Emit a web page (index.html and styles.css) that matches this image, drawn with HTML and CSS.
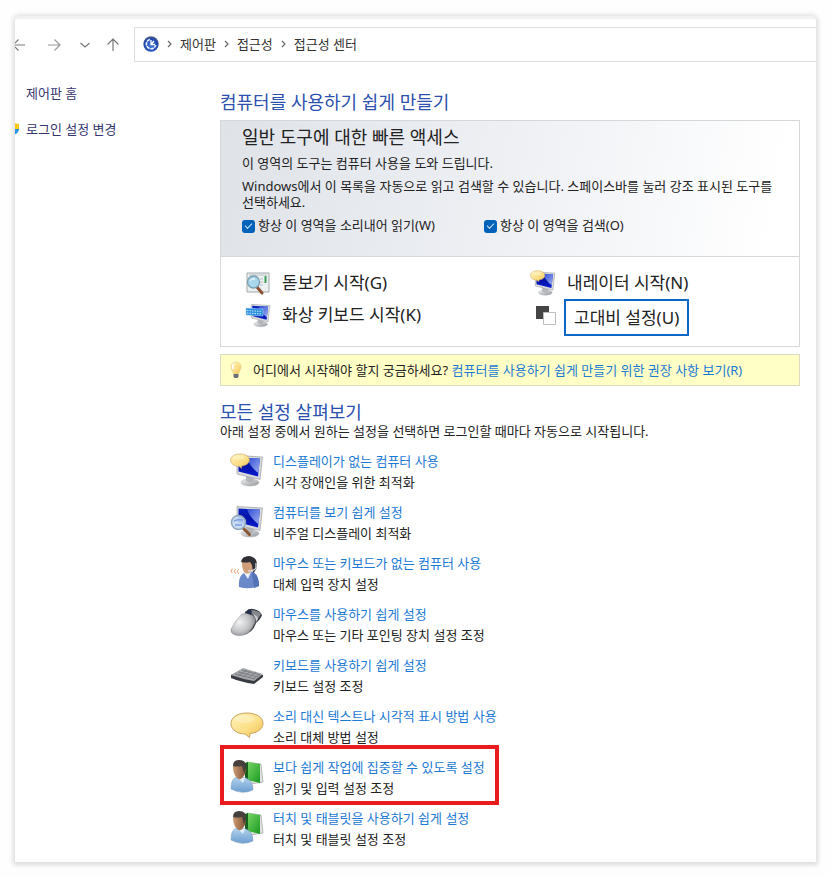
FILE: index.html
```html
<!DOCTYPE html>
<html lang="ko">
<head>
<meta charset="utf-8">
<title>접근성 센터</title>
<link rel="stylesheet" href="styles.css">
</head>
<body>
<svg class="defs" aria-hidden="true">
  <defs>
    <linearGradient id="screen" x1="0" y1="0" x2="0" y2="1"><stop offset="0" stop-color="#0a22c0"/><stop offset=".5" stop-color="#0412a8"/><stop offset="1" stop-color="#0a1cd0"/></linearGradient>
    <linearGradient id="sheen" x1="0" y1="0" x2="1" y2="1"><stop offset="0" stop-color="#3656dc"/><stop offset="1" stop-color="#b9cbf8"/></linearGradient>
    <linearGradient id="metal" x1="0" y1="0" x2="1" y2="1"><stop offset="0" stop-color="#f6f6f6"/><stop offset="1" stop-color="#8e9297"/></linearGradient>
    <linearGradient id="gold" x1="0" y1="0" x2="1" y2="1"><stop offset="0" stop-color="#fff3bd"/><stop offset=".6" stop-color="#fbdd83"/><stop offset="1" stop-color="#eebd4d"/></linearGradient>
    <linearGradient id="shirt" x1="0" y1="0" x2="0" y2="1"><stop offset="0" stop-color="#b4d3ee"/><stop offset="1" stop-color="#6c9fd0"/></linearGradient>
    <linearGradient id="book" x1="0" y1="0" x2="1" y2="1"><stop offset="0" stop-color="#7fd968"/><stop offset="1" stop-color="#179a22"/></linearGradient>
    <linearGradient id="skin" x1="0" y1="0" x2="1" y2="0"><stop offset="0" stop-color="#cf9c74"/><stop offset="1" stop-color="#7e5236"/></linearGradient>
    <radialGradient id="shell" cx=".35" cy=".4" r=".75"><stop offset="0" stop-color="#f2f2f2"/><stop offset=".55" stop-color="#c4c5c7"/><stop offset="1" stop-color="#7d8084"/></radialGradient>
    <radialGradient id="orb" cx=".5" cy=".6" r=".6"><stop offset="0" stop-color="#3f78e0"/><stop offset=".75" stop-color="#2348ac"/><stop offset="1" stop-color="#59647e"/></radialGradient>
    <symbol id="monitor" viewBox="0 0 34 34">
      <ellipse cx="20" cy="29.500" rx="9" ry="3.500" fill="url(#metal)" stroke="#b4b6b9" stroke-width=".6"/>
      <path d="M16 23l8 2-1 4q-4 1-7-1z" fill="#b4b6ba"/>
      <path d="M7 2.500L32.500 4 30 26.500 7 21z" fill="#d8dadc" stroke="#9b9ea2" stroke-width=".7"/>
      <path d="M8.500 4.500L30 5.600 28 23.500 8.500 18.500z" fill="url(#screen)"/>
      <path d="M17 5L30 5.600 28.400 20Q20 14 17 5z" fill="url(#sheen)" opacity=".85"/>
    </symbol>
    <symbol id="bubble" viewBox="0 0 34 26">
      <path d="M17 1C8 1 1 5 1 11.500S8 22 15 22l4.500 3.500.5-4C27 21 33 17 33 11.500 33 5 26 1 17 1z" fill="url(#gold)" stroke="#c9a362" stroke-width="1"/>
      <ellipse cx="15" cy="7" rx="10" ry="4" fill="#fffbe0" opacity=".35"/>
    </symbol>
    <symbol id="talking" viewBox="0 0 34 34">
      <use href="#monitor" width="34" height="34"/><use href="#bubble" x="0" y="0" width="20" height="16"/>
    </symbol>
    <symbol id="magnify" viewBox="0 0 34 34">
      <use href="#monitor" width="34" height="34"/>
      <path d="M13 24l6.500 6.500" stroke="#8a5632" stroke-width="3" stroke-linecap="round"/>
      <circle cx="8.500" cy="18.500" r="7" fill="#c3daf3" fill-opacity=".9" stroke="#8ea6ba" stroke-width="1.500"/>
      <path d="M4 17q4-2 9-1M5 21h7" fill="none" stroke="#7d9de2" stroke-width="1.500"/>
    </symbol>
    <symbol id="headset" viewBox="0 0 34 34">
      <path d="M9 32q-1-11 5-14l9-1q6 3 6 14-10 4-20 1z" fill="#6a89cb"/>
      <path d="M14 18l7-1-3 7z" fill="#eef2fa"/><path d="M22 17q7 3 7 14l-5 2z" fill="#5472b6"/>
      <path d="M12 8q1-6 7-6 6 1 6 8 0 5-4 7-4 3-7 0-2-3-2-9z" fill="#cf9f7c"/>
      <path d="M11 7q1-6 8-6 8 1 8 9 0 5-4 8l-1-8-2-3q-5 1-9 0z" fill="#2f2f34"/>
      <path d="M26 8v5q-2 3-8 3" fill="none" stroke="#d9dce2" stroke-width="1.300"/>
      <path d="M9 14l-2 2 2 3M6 14l-2 2 2 3M3 14l-2 1 1 3" fill="none" stroke="#f0a983" stroke-width="1"/>
    </symbol>
    <symbol id="mouse" viewBox="0 0 34 34">
      <path d="M15 6q4-4 8-3 7 1 9 6-1 4-6 8-3 10-13 12z" fill="#3b3e44"/>
      <path d="M19 4q9 0 12 4l-4 6q-2-6-9-8z" fill="#85898e"/>
      <path d="M23 8q5 2 5 5l-2 3q0-4-3-8z" fill="#c9cbce"/>
      <path d="M1 23Q5 15 12 8q6-2 10 1 4 3 3 7-2 6-7 11-6 4-13 2-5-2-4-6z" fill="url(#shell)" stroke="#85888c" stroke-width=".5"/>
      <path d="M16 7l3-4 3 2-1 4z" fill="#24304c"/>
    </symbol>
    <symbol id="keyboard" viewBox="0 0 34 34">
      <path d="M1 18L13 12l20 6v2l-9 7Q11 25 1 21z" fill="#3a3c44"/><path d="M1 18L13 11l20 6-9 7Q12 22 1 18z" fill="#a5a7ab"/>
      <path d="M5 17l20 5M8 15l20 5M12 13l18 5M8 19l9-6M13 20l8-6M18 21l8-6M23 22l7-5" stroke="#6d7075" stroke-width=".7"/>
    </symbol>
    <symbol id="reader" viewBox="0 0 34 34">
      <path d="M17 3l14 2 2 18-13 2z" fill="#e0e3e0" stroke="#8b948b" stroke-width=".6"/><path d="M16 4l2-1 12 2v19l-13-3z" fill="url(#book)"/><path d="M15 4l3-1v19l-3-1z" fill="#14601b"/>
      <path d="M1 30q0-11 6-12l9 1q7 3 7 12-11 5-22-1z" fill="url(#shirt)" stroke="#7f9fbc" stroke-width=".6"/>
      <path d="M7 18l8 1-2 5z" fill="#dfeefb"/>
      <path d="M3 8q0-6 6-6 7 0 7 7 0 6-3 9-3 4-6 1Q3 15 3 8z" fill="url(#skin)"/>
      <path d="M3 7q0-6 6-6 8 0 7 8l-2 5-2-7q-5 1-9 0z" fill="#46403d"/>
    </symbol>
    <symbol id="lens" viewBox="0 0 26 26">
      <path d="M2 3h22v19H2z" fill="#edf0f1" stroke="#a3a8aa"/><path d="M4 5h18M15 9h3M15 12h3M15 15h3" stroke="#bac2c5"/><path d="M20.500 6v7" stroke="#36a152" stroke-width="2"/>
      <path d="M12 17l5 6" stroke="#895230" stroke-width="3" stroke-linecap="round"/><circle cx="8.500" cy="12" r="6" fill="#a9d8ee" stroke="#799eae" stroke-width="1.300"/><path d="M5 11q1-3 5-2" fill="none" stroke="#fff"/>
    </symbol>
    <symbol id="screenkeys" viewBox="0 0 26 26">
      <use href="#monitor" x="1" y="0" width="25" height="26"/><path d="M1 6l17 1v7L1 13z" fill="#2b8fe0" stroke="#a5d7f8" stroke-width=".6"/><path d="M2 8.500l15 1M2 11l15 1" stroke="#c9e9ff" stroke-dasharray="1.500 1"/>
    </symbol>
    <symbol id="contrast" viewBox="0 0 26 26">
      <path d="M6 2h13v13H6z" fill="#454545"/><path d="M13.500 8.500h12v12h-12z" fill="#fff" stroke="#bdbdbd"/>
    </symbol>
  </defs>
</svg>

<div class="window">
  <header class="toolbar">
    <div class="history">
      <button class="nav back" type="button" aria-label="뒤로"><svg viewBox="0 0 14 14"><path d="M13 7H1M6.500 1.500L1 7l5.500 5.500"/></svg></button>
      <button class="nav forward" type="button" aria-label="앞으로"><svg viewBox="0 0 14 14"><path d="M1 7h12M7.500 1.500L13 7l-5.500 5.500"/></svg></button>
      <button class="nav recent" type="button" aria-label="최근 위치"><svg viewBox="0 0 14 14"><path d="M2.500 5l4.500 4 4.500-4"/></svg></button>
      <button class="nav up" type="button" aria-label="위로"><svg viewBox="0 0 14 14"><path d="M7 13V1M1.500 6.500L7 1l5.500 5.500"/></svg></button>
    </div>
    <nav class="address" aria-label="위치">
      <svg class="orb" viewBox="0 0 16 16"><circle cx="8" cy="8" r="7.700" fill="url(#orb)"/><path d="M7 3.500A4.700 4.700 0 1 0 12.700 9" fill="none" stroke="#e9f1ff" stroke-width="1.600" stroke-dasharray="3.500 .7"/><path d="M8 4v4.500h4M8 8.500L11 5" fill="none" stroke="#fff" stroke-width="1.300"/></svg>
      <svg class="chev" viewBox="0 0 7 10"><path d="M2 2l3 3-3 3"/></svg>
      <a href="#">제어판</a>
      <svg class="chev" viewBox="0 0 7 10"><path d="M2 2l3 3-3 3"/></svg>
      <a href="#">접근성</a>
      <svg class="chev" viewBox="0 0 7 10"><path d="M2 2l3 3-3 3"/></svg>
      <a href="#">접근성 센터</a>
    </nav>
  </header>

  <div class="body">
    <aside class="side">
      <a href="#">제어판 홈</a>
      <a class="admin" href="#"><svg class="shield" viewBox="0 0 12 14"><path d="M6 1L1 3v4q0 4 5 6z" fill="#2f8ce0"/><path d="M6 1l6 1v5H6z" fill="#fbc90e"/><path d="M6 7h6q0 4-6 6z" fill="#2790df"/></svg>로그인 설정 변경</a>
    </aside>

    <main class="main">
      <h1>컴퓨터를 사용하기 쉽게 만들기</h1>
      <section class="quick">
        <div class="intro">
          <h2>일반 도구에 대한 빠른 액세스</h2>
          <p>이 영역의 도구는 컴퓨터 사용을 도와 드립니다.</p>
          <p>Windows에서 이 목록을 자동으로 읽고 검색할 수 있습니다. 스페이스바를 눌러 강조 표시된 도구를 선택하세요.</p>
          <div class="checks">
            <label><input type="checkbox" checked>항상 이 영역을 소리내어 읽기(W)</label>
            <label><input type="checkbox" checked>항상 이 영역을 검색(O)</label>
          </div>
        </div>
        <div class="tools">
          <a class="tool" href="#"><svg><use href="#lens"/></svg><span>돋보기 시작(G)</span></a>
          <a class="tool" href="#"><svg><use href="#talking"/></svg><span>내레이터 시작(N)</span></a>
          <a class="tool" href="#"><svg><use href="#screenkeys"/></svg><span>화상 키보드 시작(K)</span></a>
          <a class="tool picked" href="#"><svg><use href="#contrast"/></svg><span>고대비 설정(U)</span></a>
        </div>
      </section>

      <p class="tip">
        <svg viewBox="0 0 12 18"><path d="M6 1C2 1 1 4 1 6c0 3 2 4 2.500 7h5C9 10 11 9 11 6c0-2-1-5-5-5z" fill="url(#gold)" stroke="#e3c98c" stroke-width=".6"/><path d="M4 3q-2 2-1 5" fill="none" stroke="#fff" stroke-width="1.500"/><path d="M3.500 13h5v2.500l-1 1.500h-3l-1-1.500z" fill="#6c7079"/></svg>
        <span>어디에서 시작해야 할지 궁금하세요? <a href="#">컴퓨터를 사용하기 쉽게 만들기 위한 권장 사항 보기(R)</a></span>
      </p>

      <h2 class="explore">모든 설정 살펴보기</h2>
      <p class="lead">아래 설정 중에서 원하는 설정을 선택하면 로그인할 때마다 자동으로 시작됩니다.</p>
      <ul class="settings">
        <li><svg><use href="#talking"/></svg><div><a href="#">디스플레이가 없는 컴퓨터 사용</a><p>시각 장애인을 위한 최적화</p></div></li>
        <li><svg><use href="#magnify"/></svg><div><a href="#">컴퓨터를 보기 쉽게 설정</a><p>비주얼 디스플레이 최적화</p></div></li>
        <li><svg><use href="#headset"/></svg><div><a href="#">마우스 또는 키보드가 없는 컴퓨터 사용</a><p>대체 입력 장치 설정</p></div></li>
        <li><svg><use href="#mouse"/></svg><div><a href="#">마우스를 사용하기 쉽게 설정</a><p>마우스 또는 기타 포인팅 장치 설정 조정</p></div></li>
        <li><svg><use href="#keyboard"/></svg><div><a href="#">키보드를 사용하기 쉽게 설정</a><p>키보드 설정 조정</p></div></li>
        <li><svg><use href="#bubble"/></svg><div><a href="#">소리 대신 텍스트나 시각적 표시 방법 사용</a><p>소리 대체 방법 설정</p></div></li>
        <li class="marked"><svg><use href="#reader"/></svg><div><a href="#">보다 쉽게 작업에 집중할 수 있도록 설정</a><p>읽기 및 입력 설정 조정</p></div></li>
        <li><svg><use href="#reader"/></svg><div><a href="#">터치 및 태블릿을 사용하기 쉽게 설정</a><p>터치 및 태블릿 설정 조정</p></div></li>
      </ul>
    </main>
  </div>
</div>
</body>
</html>
```
FILE: styles.css
```css
* { box-sizing: border-box; }
body {
  margin: 0;
  padding: 16px 15px;
  background: #fefefe;
  color: #222;
  font: 13px/16px "Noto Sans", "Noto Sans CJK KR", sans-serif;
}
h1, h2, p, ul { margin: 0; padding: 0; }
h1, h2 { font-size: 18px; line-height: 26px; font-weight: 400; }
a { color: #1c79d4; text-decoration: none; }
svg { flex: none; display: block; }
.defs { position: absolute; width: 0; height: 0; }

.window {
  overflow: hidden;
  background: #fff;
  border-top: 3px solid #f0f2f3;
  border-radius: 4px 4px 0 0;
  box-shadow: 0 1px 5px 2px rgba(0, 0, 0, .14);
}

.toolbar { display: flex; padding-top: 8px; }
.history { display: flex; margin-left: -11px; }
.nav {
  display: flex;
  align-items: center;
  justify-content: center;
  width: 30px;
  padding: 0;
  border: 0;
  background: none;
}
.nav svg { width: 14px; height: 14px; fill: none; stroke: #777; stroke-width: 1.2; }
.forward { width: 40px; }
.forward svg { stroke: #999; }
.recent { width: 22px; }
.up { width: 34px; }
.address {
  flex: 1;
  display: flex;
  align-items: center;
  gap: 7px;
  height: 35px;
  margin-left: 4px;
  padding: 0 0 2px 8px;
  border: 1px solid #dedede;
  border-right: 0;
}
.address a { color: #333; }
.orb { width: 16px; height: 16px; }
.chev { width: 7px; height: 10px; fill: none; stroke: #666; stroke-width: 1.2; }

.body { display: grid; grid-template-columns: 205px minmax(0, 1fr); }
.side { display: flex; flex-direction: column; gap: 20px; padding: 23px 0 0 11px; }
.side a { color: #36366f; }
.admin { display: flex; align-items: center; }
.shield { width: 12px; height: 14px; margin: 0 7px 0 -19px; }
.main { padding: 27px 16px 7px 0; }
h1, .explore { color: #2b50ae; }

.quick { margin-top: 5px; border: 1px solid #d5d7d9; }
.intro {
  padding: 3px 22px 23px 21px;
  background: linear-gradient(100deg, #dfe3e8, #eef0f4 50%, #fff 95%);
  border-bottom: 1px solid #d5d7d9;
}
.intro p { margin-top: 5px; }
.intro p + p { margin-top: 7px; }
.checks { display: grid; grid-template-columns: 242px 1fr; margin-top: 7px; }
.checks label { display: flex; align-items: center; gap: 3px; }
.checks input {
  appearance: none;
  display: grid;
  place-items: center;
  width: 13px;
  height: 13px;
  margin: 2px 0 0;
  border-radius: 3px;
  background: #0062b8;
}
.checks input::after {
  content: "";
  width: 6px;
  height: 3px;
  margin-bottom: 2px;
  border: solid #cfe4f6;
  border-width: 0 0 1px 1px;
  transform: rotate(-45deg);
}

.tools {
  display: grid;
  grid-template-columns: 285px 1fr;
  align-items: start;
  padding: 10px 0 11px 24px;
}
.tool { display: flex; align-items: center; gap: 11px; height: 32px; color: #222; font-size: 17px; line-height: 24px; }
.tool svg { width: 26px; height: 26px; }
.picked { gap: 8px; height: 36px; }
.picked span { padding: 5px 8px 4px; border: 2px solid #0b68c6; }

.tip {
  display: flex;
  align-items: center;
  gap: 11px;
  min-height: 32px;
  margin-top: 7px;
  padding-left: 9px;
  border: 1px solid #d9d9c4;
  background: #ffffc6;
}
.tip svg { width: 12px; height: 18px; }
.explore { margin-top: 13px; }
.lead { margin-top: -2px; }
.settings { margin-top: 8px; list-style: none; }
.settings li {
  position: relative;
  display: flex;
  gap: 9px;
  width: fit-content;
  padding: 4px 14px 5px 10px;
  line-height: 21px;
}
.settings svg { width: 34px; height: 34px; margin-top: 2px; }
.settings a { display: block; }
.marked::after {
  content: "";
  position: absolute;
  inset: -8px 0 -1px;
  border: 4px solid #e91b1f;
  pointer-events: none;
}
```
